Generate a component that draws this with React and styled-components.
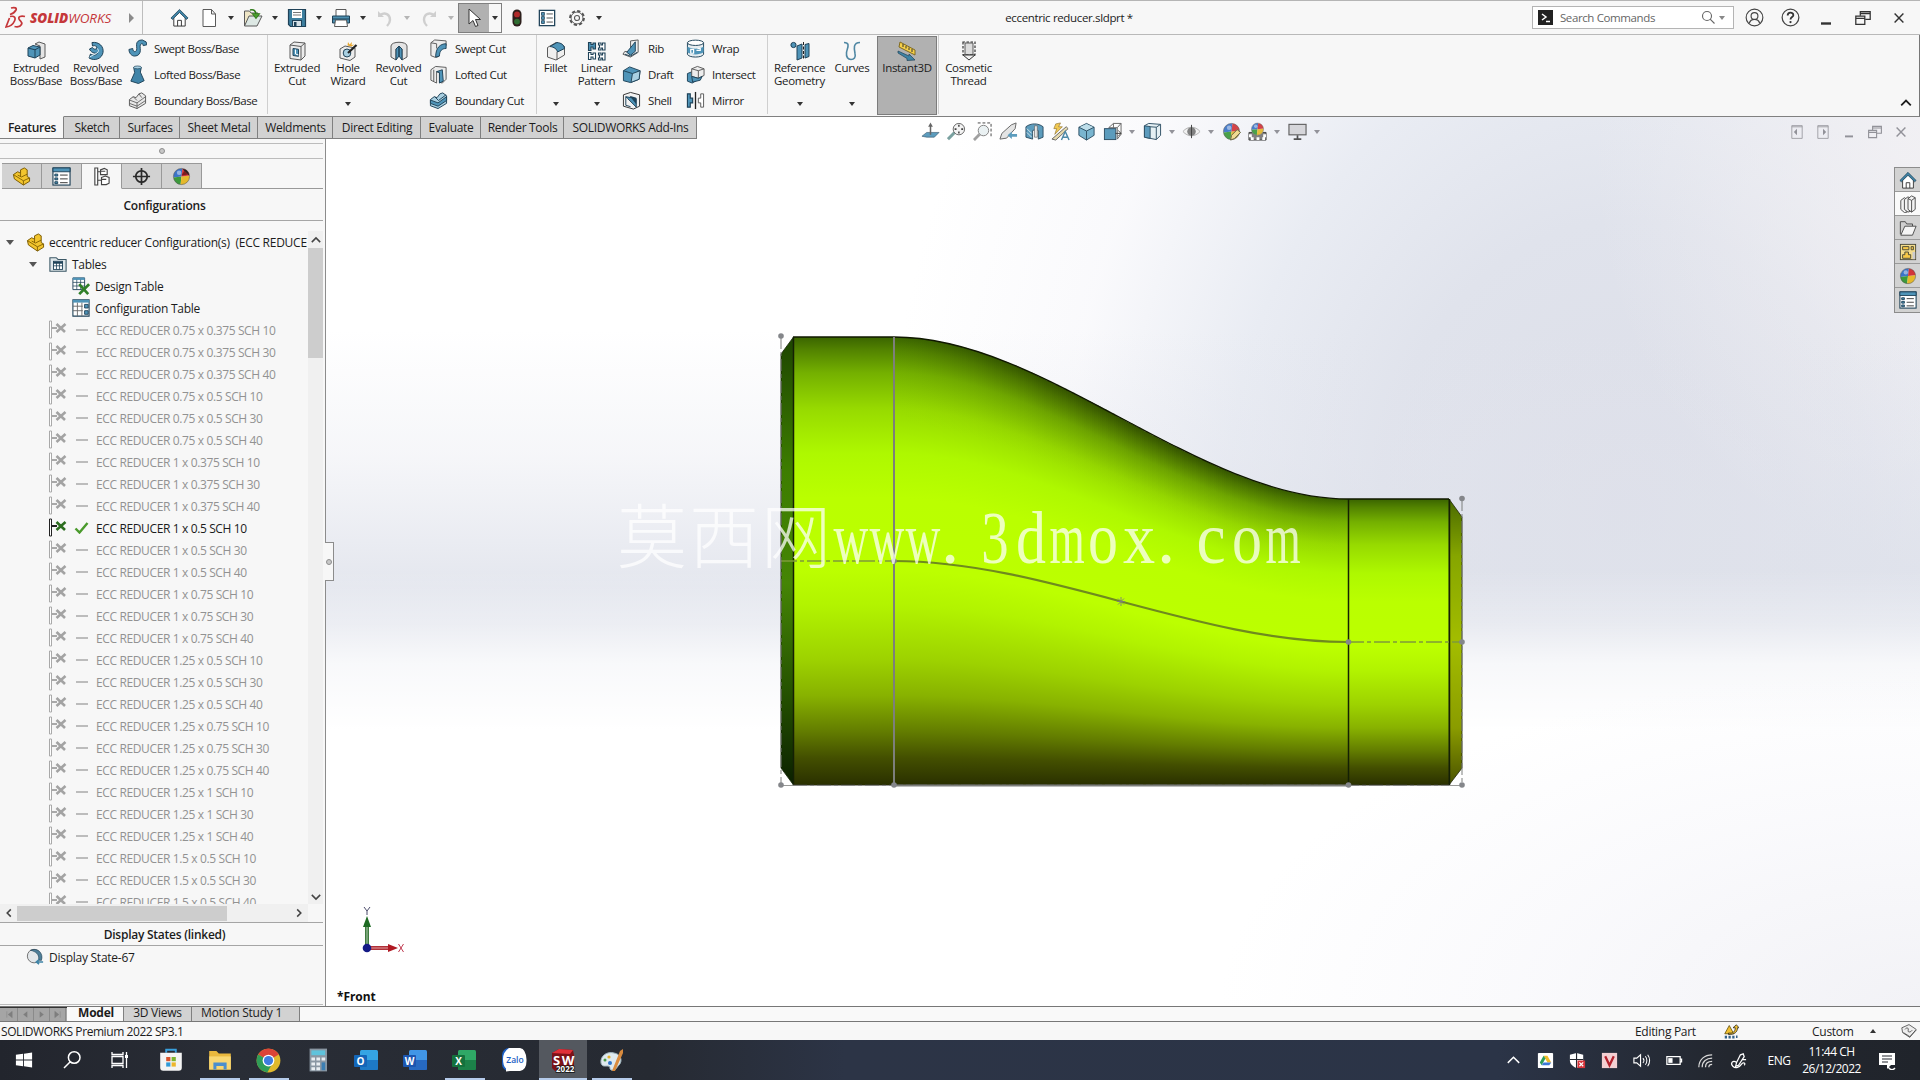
import React from "react";
import styled, { createGlobalStyle, css } from "styled-components";

const GlobalStyle = createGlobalStyle`
  * {
    box-sizing: border-box;
  }
  html, body {
    margin: 0;
    padding: 0;
    background: #f7f7f7;
  }
  body {
    width: 1920px;
    height: 1080px;
    overflow: hidden;
    font-family: "Open Sans", "Noto Sans", sans-serif;
    font-size: 12px;
    letter-spacing: -0.3px;
    color: #1c1c1c;
  }
  svg {
    display: block;
    flex: none;
  }
`;

/* ---------- icons ---------- */

const B = "#4f94b8";
const L = "#a9d0e2";
const D = "#1f4258";
const G = "#5a5a5a";

const house = (
  <>
    <path d="M4 10v9h12v-9l-6-6z" fill="#fff" stroke="#333" />
    <path d="M1 10.5L10 1.5l9 9-1.6 1.5L10 4.8 2.6 12z" fill="#3f84a6" stroke={D} strokeWidth=".8" />
    <path d="M8 19v-6h4v6" fill="none" stroke="#333" />
  </>
);
const listSheet = (
  <>
    <rect x="1.5" y="1.5" width="17" height="17" fill="#fff" stroke={D} strokeWidth="1.4" />
    <g fill={B} stroke={D} strokeWidth=".9">
      <rect x="4" y="4" width="3" height="3" />
      <rect x="4" y="8.5" width="3" height="3" />
      <rect x="4" y="13" width="3" height="3" />
    </g>
    <path d="M9.5 5.5h7M9.5 10h7M9.5 14.5h7" stroke="#444" />
  </>
);
const colorBall = (
  <>
    <circle cx="10" cy="10" r="8.5" fill="#e9e9e9" />
    <path d="M10 10L11 1.6A8.5 8.5 0 0 0 1.6 11z" fill="#3b74c9" />
    <path d="M10 10L1.6 11A8.5 8.5 0 0 0 9 18.5z" fill="#3c9a3c" />
    <path d="M10 10L9 18.5A8.5 8.5 0 0 0 18.4 9z" fill="#e5b92c" />
    <path d="M10 10L18.4 9A8.5 8.5 0 0 0 11 1.6z" fill="#d2343a" />
    <circle cx="7.5" cy="6" r="2.4" fill="#fff" opacity=".45" />
    <circle cx="10" cy="10" r="8.5" fill="none" stroke="#555" strokeWidth=".6" />
  </>
);

const icons = {
  home: house,
  newDoc: <path d="M4 1.5h8.5L16.5 6v12.5H4zM12.5 1.5V6h4" fill="#fff" stroke={G} />,
  open: (
    <>
      <path d="M1.5 18V3h5L8 5h7v4" fill="#efe6c6" stroke={G} />
      <path d="M1.5 18L6 8h13l-5 10z" fill="#dde8e4" stroke={G} />
      <path d="M7 2c4-1 6 1 6 5M10 6l3 4 3-4z" stroke="#2e7a18" strokeWidth="1.6" />
      <path d="M10 6l3 4 3-4z" fill="#4a9b2e" />
    </>
  ),
  save: (
    <>
      <path d="M1.5 1.5h17v17h-15l-2-2z" fill="#3d7f9f" stroke={D} strokeWidth="1.2" />
      <rect x="5" y="2" width="10" height="8" fill="#fff" />
      <path d="M6 4.5h8M6 7h8" stroke="#777" />
      <rect x="5.5" y="12.5" width="9" height="6" fill="#d6e2e8" stroke={D} />
      <rect x="7" y="14" width="2.5" height="4" fill={D} />
    </>
  ),
  print: (
    <>
      <path d="M5 8V1.5h10V8" fill="#fff" stroke={G} />
      <path d="M1.5 8h17v7h-17z" fill="#4d8fb0" stroke={D} />
      <path d="M4.5 12h11l1 6.5h-13z" fill="#fff" stroke={G} />
      <path d="M1.5 11h17" stroke={D} />
    </>
  ),
  undo: (
    <>
      <path d="M3 3v6h6z" fill="#cfcfcf" />
      <path d="M5 7c5-3 10-1 10 5 0 2-1 4-3 6" stroke="#cfcfcf" strokeWidth="2.4" />
    </>
  ),
  redo: (
    <>
      <path d="M17 3v6h-6z" fill="#cfcfcf" />
      <path d="M15 7C10 4 5 6 5 12c0 2 1 4 3 6" stroke="#cfcfcf" strokeWidth="2.4" />
    </>
  ),
  cursor: <path d="M5 1v15l4-3.5 2.5 6 2.5-1-2.5-6h5z" fill="#fff" stroke="#333" />,
  traffic: (
    <>
      <rect x="5" y=".5" width="10" height="19" rx="5" fill="#2d1f1c" />
      <circle cx="10" cy="6" r="3.3" fill="#b02a2a" />
      <circle cx="10" cy="14" r="3.3" fill="#2f6d32" />
    </>
  ),
  list: listSheet,
  gear: (
    <>
      <circle cx="10" cy="10" r="7.6" stroke="#555" strokeWidth="2.4" strokeDasharray="3.6 2.36" />
      <circle cx="10" cy="10" r="6.6" fill="#f7f7f7" stroke="#555" />
      <circle cx="10" cy="10" r="2.8" stroke="#555" strokeWidth="1.2" />
    </>
  ),
  extrude: (
    <>
      <path d="M9 3l4-2 6 2v13l-5 2V5z" fill="#e4e4e4" stroke={G} />
      <path d="M2 7l5-2.5L14 6v8l-5 3-7-2z" fill={B} stroke={D} />
      <path d="M2 7l7 1.8V17M9 8.8L14 6" stroke={D} />
    </>
  ),
  revolve: (
    <>
      <path
        d="M6 1.5c7-1 12 4 11 10-1 6-8 9-14 5.5L4.5 13c3 2 6 1 7-1-3 1-7-1-8-4l3-1.5c1 2 3 2 4.5 1C11 5 9 4 6.5 5z"
        fill={B}
        stroke={D}
      />
      <path d="M11 12l-7.5 4M11 7.5c2 1 2 3 0 4.5" stroke="#d9ecf5" />
    </>
  ),
  sweep: (
    <path
      d="M19 3l-4-2c-4 0-6 2-6 5s1 6-1 7-3-1-3-3l-4 1c0 4 3 7 6 7 4 0 6-3 6-6s-1-6 1-7c2 0 2 1 2 2l4-1z"
      fill={B}
      stroke={D}
    />
  ),
  loft: (
    <>
      <path d="M6 2.5h8l-1 5 4 9-6 3-8-2.5 4-9z" fill="#4084a8" stroke={D} />
      <ellipse cx="10" cy="2.5" rx="4" ry="1.5" fill={L} stroke={D} strokeWidth=".7" />
    </>
  ),
  boundary: (
    <>
      <path d="M1.5 9l4-3 3 1 3-4 3-1 4 3v8l-9 5.5-8-3z" fill="#e8e8e8" stroke={G} />
      <path d="M1.5 9.5l8 3 9-6.5M9.5 12.5v6M5.5 6l4 4M11.5 3l3 4M1.5 13l8 3 9-6" stroke={G} strokeWidth=".9" />
    </>
  ),
  extrudeCut: (
    <>
      <path d="M3 4l4-3 11 1v13l-4 4-11-1.5z" fill="#ececec" stroke={G} />
      <path d="M3 4l11 1.5V19M14 5.5L18 2" stroke={G} />
      <path d="M6 7.5l5.5.8v7L6 14.5z" fill={B} stroke={D} />
      <path d="M8.5 8.5V13l3 1" stroke="#fff" />
    </>
  ),
  hole: (
    <>
      <path d="M2 8l5-3 10 2v9l-5 3.5L2 17z" fill="#ececec" stroke={G} />
      <ellipse cx="9" cy="12" rx="3.8" ry="4" fill={L} stroke={D} />
      <path d="M10 12L18.5 4" stroke="#222" strokeWidth="2.2" />
      <path d="M10 1l1.5 2.5L14 1l-.5 3 3-.5-3 2-4-1z" fill="#e8a72e" />
    </>
  ),
  revolveCut: (
    <>
      <path d="M2 5c0-5 16-5 16 0v11l-5 3V8l-3-2-3 2v11l-5-3z" fill="#e4e4e4" stroke={G} />
      <path d="M7 8l3-3v10l-3 4zM13 8l-3-3v10l3 4z" fill={B} stroke={D} />
    </>
  ),
  sweepCut: (
    <>
      <path d="M2 4l4-3 12 1v5c-5 0-8 4-8 9v2.5l-3 1-5-2z" fill="#ececec" stroke={G} />
      <path d="M18 5C12 5 7 9 7 19l4-1c0-6 3-8 7-8z" fill={B} stroke={D} />
      <path d="M2 4l6 1v5" stroke={G} />
    </>
  ),
  loftCut: (
    <>
      <path d="M2 5l5-3.5 11 1V15l-4 4-3-1V8L8 7v12l-6-3z" fill="#ececec" stroke={G} />
      <path d="M8 7l6-2 1 12-4 2V8z" fill={B} stroke={D} />
      <path d="M5 5v12" stroke={G} />
    </>
  ),
  boundaryCut: (
    <>
      <path d="M1.5 9l4-3 3 1 3-4 3-1 4 3v8l-9 5.5-8-3z" fill={L} stroke={D} />
      <path d="M1.5 9.5l8 3 9-6.5v4l-9 6-8-3z" fill={B} stroke={D} />
      <path d="M6 6l4 4 8-6" stroke={D} />
    </>
  ),
  fillet: (
    <>
      <path d="M1.5 6.5L10 1.5l8.5 4V14L10 19l-8.5-3z" fill="#efefef" stroke={G} />
      <path d="M4 5.5l7-4c4 .5 7 2 7.5 6l-7 3.5C11 8 8 6 4 5.5z" fill={B} stroke={D} />
      <path d="M11 11v8" stroke={G} />
    </>
  ),
  pattern: (
    <g fill="#fff" stroke={D} strokeWidth="1.1">
      <path d="M1.5 1.5H4v2h2V2h2.5v6H6V6H4v3.5H1.5z" fill={B} />
      <path d="M11.5 2H14v2h1.5V2H18v7h-2.5V7H14v2h-2.5V7h1V4h-1z" />
      <path d="M1.5 11.5H4v2h2V12h2.5v6H6v-2H4v2.5H1.5z" />
      <path d="M11.5 12H14v2h1.5v-2H18v7h-2.5v-2H14v2h-2.5v-2h1v-3h-1z" />
    </g>
  ),
  rib: (
    <>
      <path d="M9 2l8-1v13l-8 5-8-3 2-3 6 1z" fill="#efefef" stroke={G} />
      <path d="M5 14L14 3v10l-5 4z" fill={B} stroke={D} />
      <path d="M3 16l6 2 7-4" stroke={D} />
    </>
  ),
  draft: (
    <>
      <path d="M1.5 6L8 2l11 4-1 9-9 3.5-7.5-2z" fill={B} stroke={D} />
      <path d="M11 9l8-3-1 9-8.5 3.3z" fill={L} stroke={D} />
      <path d="M1.5 6L11 9" stroke={D} />
    </>
  ),
  shell: (
    <>
      <path d="M1.5 4L9 1.5 18.5 4v12L12 19 1.5 16z" fill="#f2f2f2" stroke="#333" />
      <path d="M4 6l11 2v9L6 8z" fill={B} stroke={D} />
      <path d="M8 5l7 2v7z" fill={D} />
      <path d="M4 6v9l5 1.5" stroke={D} />
    </>
  ),
  wrap: (
    <>
      <path d="M1.5 4v12c1 4 16 4 17 0V4" fill="#e8eef1" stroke={D} />
      <path d="M1.5 8c4 3 13 3 17 0v6c-4 3-13 3-17 0z" fill={B} />
      <ellipse cx="10" cy="4" rx="8.5" ry="2.8" fill="#fff" stroke={D} />
      <path d="M5 11h3v4H5zM11 12h4v-2h-3" stroke="#fff" strokeWidth="1.3" />
    </>
  ),
  intersect: (
    <>
      <path d="M1.5 9l5-2 5 2v7l-5 3-5-2z" fill={B} stroke={D} />
      <path d="M6 4l6-2.5L19 4v7l-6 3-7-2z" fill="#ededed" stroke={G} />
      <path d="M6 4l7 2v8M13 6l6-2" stroke={G} />
      <path d="M6 12l7 2 4-2-2 4-8 2z" fill={B} stroke={D} />
    </>
  ),
  mirror: (
    <>
      <path d="M1.5 3h3v4.5H7v5H4.5V17h-3z" fill={B} stroke={D} strokeWidth="1.2" />
      <path d="M10 1v18" stroke="#222" strokeWidth="1.4" />
      <path d="M13 7.5h2.5V3h3v14h-3v-4.5H13z" fill="#fff" stroke={G} />
    </>
  ),
  refGeo: (
    <>
      <circle cx="3.5" cy="4" r="2.6" fill={B} stroke={D} />
      <path d="M7 5l5-2v14l-5 2zM15 3.5l4-1v13L15 17z" fill={B} stroke={D} />
      <path d="M13.5 1v18" stroke="#222" strokeDasharray="3 1.5" />
    </>
  ),
  curves: (
    <path
      d="M2 1.5c7 0 3 6 2.5 10C4 16 6 18.5 9 18.5s5-2 4-6c-1-5-2-11 5-11"
      stroke="#4f87a3"
      strokeWidth="1.6"
    />
  ),
  instant: (
    <>
      <path d="M3 1l15 8v5L2 6z" fill="#f5cf49" stroke="#806a20" />
      <path d="M6 3v3M9 5v2.5M12 6.5V9M15 8v3" stroke="#333" />
      <path d="M1 10l11 5v-2l6 6-8 .5v-2L1 12z" fill="#3f84a6" stroke={D} strokeWidth=".7" />
    </>
  ),
  thread: (
    <>
      <path d="M6 2h8v12H6z" fill="#dcdcdc" stroke={G} />
      <path d="M4 1v13h12V1z" stroke="#333" strokeDasharray="2.5 1.5" strokeWidth="1.2" />
      <path d="M4 14h12l-6 5z" fill="#f0f0f0" stroke="#333" />
    </>
  ),
  normalTo: (
    <>
      <path d="M1 15l5-4h13l-5 5H6z" fill={B} stroke={D} strokeWidth=".6" />
      <path d="M10 13.5V4" stroke={G} strokeWidth="1.6" />
      <path d="M10 .5L7.5 5h5z" fill={G} />
    </>
  ),
  zoomFit: (
    <>
      <path d="M1 18l7-7" stroke="#6f9a99" strokeWidth="3.2" />
      <circle cx="12.5" cy="7.5" r="6" fill="#f3f3f3" stroke={G} />
      <path d="M12.5 3v2M12.5 10v2M8 7.5h2M15 7.5h2" stroke="#333" strokeWidth="1.6" />
    </>
  ),
  zoomArea: (
    <>
      <path d="M5 1h14v14" stroke="#333" strokeDasharray="3 2" />
      <path d="M1 19l6-6" stroke="#999" strokeWidth="3" />
      <circle cx="11" cy="9" r="5.5" fill="#e9f0f2" stroke="#777" />
    </>
  ),
  prevView: (
    <>
      <path d="M1 18l2-6L13 3l5-2-1 6-9 10z" fill="#e2e2e2" stroke={G} />
      <path d="M9 14l4.5-4v2.5H19v3h-5.5V18z" fill={B} />
    </>
  ),
  section: (
    <>
      <path d="M1 5c5-4 13-4 18 0v11l-5 2V9c-2-1-4-1-6 0v9l-7-2z" fill={B} stroke={D} />
      <path d="M2 7l5 5M2 11l5 5" stroke="#d5e6ee" />
      <path d="M10 4v12h3V4z" fill="#e5e5e5" stroke={G} strokeWidth=".7" />
    </>
  ),
  dynamic: (
    <>
      <path d="M1 18L16 5l2 2L5 19z" fill="#e6d9a8" stroke={G} />
      <path d="M5 2l5-1-2 4h4l-8 8 2-6H3z" fill="#f1c544" stroke="#8a6a1c" strokeWidth=".7" />
      <path d="M11 19l4-9 4 9M13 16h4" stroke="#3d7f9f" strokeWidth="1.5" />
    </>
  ),
  cube: (
    <>
      <path d="M2 5.5l8-4 8 4V14l-8 5-8-5z" fill="#6fb0cd" stroke={D} />
      <path d="M2.5 5.5L10 2l7.5 3.5L10 9z" fill="#b8dbe8" />
      <path d="M2 5.5l8 4 8-4M10 9.5V19" stroke={D} />
    </>
  ),
  orient: (
    <>
      <path d="M6 6l5-4.5h8V13l-4 5M11 1.5V6M6 6h9l4-4.5M15 6v12" fill="#fff" stroke={G} />
      <rect x="1.5" y="7" width="12" height="11.5" fill={B} stroke={D} />
      <path d="M13 12h6M16 9l3 3-3 3" stroke="#333" />
    </>
  ),
  displayStyle: (
    <>
      <path d="M1.5 4L6 1.5l12.5 1V14L14 18.5 1.5 16z" fill="#e4f0f4" stroke={D} />
      <path d="M1.5 4l6 .8v12.5L1.5 16z" fill={B} stroke={D} />
      <path d="M7.5 5l6.500.5v13M14 5.5l4.500-3" stroke={D} />
    </>
  ),
  eye: (
    <>
      <path d="M1 10c5-6 13-6 18 0-5 6-13 6-18 0z" fill="#f2f2f2" stroke="#aaa" />
      <circle cx="10" cy="10" r="4.5" fill="#777" />
      <path d="M10 3v14" stroke="#333" />
    </>
  ),
  appearance: (
    <>
      {colorBall}
      <path d="M9 19l1-5 6-6 3.5 3-6.5 6.5z" fill="#f0d98a" stroke="#553" />
    </>
  ),
  scene: (
    <>
      <path d="M1 11h18v8H1z" fill="#777" stroke="#333" />
      <path d="M3 19v-3h3v3M9 19v-3h3v3M15 19v-3h3v3M1 13h3v3H1zM16 13h3v3h-3z" fill="#fff" />
      <g transform="translate(2.5 0) scale(.75)">{colorBall}</g>
    </>
  ),
  monitor: (
    <>
      <rect x="1" y="2.5" width="18" height="11" fill="#d4d4d8" stroke="#555" strokeWidth="1.2" />
      <path d="M10 14v4M6 18h8" stroke="#444" strokeWidth="1.8" />
    </>
  ),
  part: (
    <>
      <path d="M1.5 8L6 5l3 1.5V3l4-2 3 2v7l2.500 1.500V15L12 19l-9.500-6.500z" fill="#f2c52e" stroke="#7a5a00" />
      <path d="M12 19v-4.500l6.500-3M12 14.500L1.500 8M6 8.500l4 2 6-3M9 6.500V10" stroke="#7a5a00" strokeWidth=".9" />
    </>
  ),
  property: (
    <>
      <rect x="1" y="1" width="18" height="18" fill="#fff" stroke={D} strokeWidth="1.2" />
      <path d="M1 1h18v4H1z" fill={B} stroke={D} />
      <path d="M3 7.5h3v2H3zM3 11.5h3v2H3zM3 15.5h3v2H3z" fill={B} stroke={D} />
      <path d="M8.5 8.5h8M8.5 12.5h8M8.5 16.5h8" stroke="#333" />
    </>
  ),
  configTab: (
    <g fill="#fff" stroke="#444" strokeWidth="1.2">
      <path d="M3 1h3v18H3zM6 5h4M6 14h5" />
      <path d="M9 3l4-1.500L16 3v5H9zM10 11l4-1.500 4 1.500v6l-3 1.500h-5z" />
      <path d="M9 4.500h5M10 13h5" />
    </g>
  ),
  target: (
    <g stroke="#2a2a2a" strokeWidth="1.8">
      <circle cx="10" cy="10" r="6" />
      <path d="M10 1v18M1 10h18" />
    </g>
  ),
  ball: colorBall,
  managerBall: (
    <>
      {colorBall}
      <path d="M11 2l7 7c0-4-3-7-7-7z" fill="#222" />
      <path d="M10 9l3-5 4 4z" fill="#7a1c20" />
    </>
  ),
  tables: (
    <>
      <path d="M1 3h7l2 2h9v13H1z" fill="#dfe7ea" stroke="#3c5866" strokeWidth="1.2" />
      <rect x="5" y="7" width="10" height="9" fill="#fff" stroke={D} />
      <path d="M5 8.5h10" stroke={D} strokeWidth="2.4" />
      <path d="M5 12h10M8.3 9v7M11.6 9v7" stroke={D} strokeWidth=".9" />
    </>
  ),
  designTable: (
    <>
      <path d="M1 1h13v13H1z" fill="#fff" stroke={D} />
      <path d="M1 2h13" stroke={B} strokeWidth="2.5" />
      <path d="M1 6h13M1 10h13M5.3 3v11M9.6 3v11" stroke={D} strokeWidth=".8" />
      <path d="M8 8l10 11M19 8L8 19" stroke="#2f7f28" strokeWidth="3" />
    </>
  ),
  configTable: (
    <>
      <path d="M1 1h18v18H1z" fill="#fff" stroke={D} strokeWidth="1.2" />
      <path d="M1 2.5h18" stroke={B} strokeWidth="3" />
      <path d="M1 8h11M1 13h11M6 4v15M11 4v15" stroke="#666" />
      <path d="M14 6h4v4h-4zM14 13h4v4h-4z" fill={B} stroke={D} />
    </>
  ),
  displayState: (
    <>
      <circle cx="9" cy="9" r="7.5" fill="#e3e7ea" stroke="#666" />
      <path d="M5 2.5C13-1 20 6 17 14l-3-1c1-6-3-9-9-10.5z" fill="#4f7f99" stroke={D} strokeWidth=".7" />
      <path d="M12 15.5h7M14.5 13l-3 2.5 3 2.5" stroke="#3f84a6" strokeWidth="1.7" />
    </>
  ),
  books: (
    <g fill="#f3f3f3" stroke="#444">
      <path d="M2 6l4-3 3 2v14l-3 .5L2 16z" />
      <path d="M6 5l4-3 3 2v14l-3 1-4-3z" />
      <path d="M10 4l4-3 4 2v13l-4 3-4-3z" />
      <path d="M14 6v13M14 6l4-3M14 6l-4-2" />
    </g>
  ),
  folder: (
    <>
      <path d="M1.5 17V3H7l1.5 2.5H15V8" fill="#cfcfcf" stroke="#444" />
      <path d="M2 18L6.5 8H19l-4 10z" fill="#f5f5f5" stroke="#444" />
    </>
  ),
  palette: (
    <>
      <rect x="1.5" y="1.5" width="17" height="17" fill="#f3dc8c" stroke="#443" />
      <path d="M4 4h7v3.5H4zM13.5 4H16v3.5h-2.5zM4 13v4h9v-4h-2.5v-3h-4v3z" fill="#f7c948" stroke="#443" />
      <rect x="15" y="10" width="3" height="8" fill="#ccc" />
    </>
  ),
  search: (
    <path d="M12.5 12.5L18 18M14 8A6 6 0 1 1 2 8a6 6 0 0 1 12 0z" stroke="currentColor" strokeWidth="1.5" />
  ),
  user: (
    <g stroke="#444" strokeWidth="1.2">
      <circle cx="10" cy="10" r="8.8" />
      <circle cx="10" cy="8.5" r="3.6" />
      <path d="M4.5 16c1-3 3-4 5.5-4s4.5 1 5.5 4" />
    </g>
  ),
  help: (
    <>
      <circle cx="10" cy="10" r="8.8" stroke="#444" strokeWidth="1.3" />
      <path d="M7 8c0-4 6-4 6-.5 0 2-3 2-3 4.5" stroke="#333" strokeWidth="1.9" />
      <circle cx="10" cy="14.8" r="1.2" fill="#333" />
    </>
  ),
  minimize: <path d="M5 15.5h10" stroke="currentColor" strokeWidth="2.4" />,
  restore: (
    <g stroke="currentColor" strokeWidth="1.4">
      <path d="M2 8h10v9H2zM2 10.5h10" />
      <path d="M7 7.5V3h11v8.5h-5.500M7 5h11" />
    </g>
  ),
  close: <path d="M4.5 4.5l11 11M15.5 4.5l-11 11" stroke="currentColor" strokeWidth="1.8" />,
  paneLeft: (
    <>
      <path d="M3.5 2h13v16h-13zM3.5 3.5h13" stroke="currentColor" />
      <path d="M10 6v8l-4-4z" fill="currentColor" />
    </>
  ),
  paneRight: (
    <>
      <path d="M3.5 2h13v16h-13zM3.5 3.5h13" stroke="currentColor" />
      <path d="M10 6v8l4-4z" fill="currentColor" />
    </>
  ),
  chevronUp: <path d="M4 13l6-6 6 6" stroke="currentColor" strokeWidth="2.2" />,
  chevronDown: <path d="M4 7l6 6 6-6" stroke="currentColor" strokeWidth="2.2" />,
  chevronLeft: <path d="M13 4l-6 6 6 6" stroke="currentColor" strokeWidth="2.6" />,
  chevronRight: <path d="M7 4l6 6-6 6" stroke="currentColor" strokeWidth="2.6" />,
  first: <path d="M4 3v14M16 3v14l-9-7z" fill="currentColor" stroke="currentColor" />,
  previous: <path d="M14 3v14l-9-7z" fill="currentColor" />,
  next: <path d="M6 3v14l9-7z" fill="currentColor" />,
  last: <path d="M16 3v14M4 3v14l9-7z" fill="currentColor" stroke="currentColor" />,
  rebuild: (
    <>
      <path d="M1 13L7 2l6 11z" fill="#f0c030" stroke="#5a4500" />
      <path d="M6 12c6 1 9-2 9-7h-3l4.5-4L20 5h-2c0 6-4 9-12 9z" fill="#f0c030" stroke="#222" />
      <path d="M1 17.5h3M6 17.5h3M11 17.5h3M16 17h2" stroke="#33618a" strokeWidth="3.5" />
    </>
  ),
  tag: (
    <g fill="#eee" stroke="#444">
      <path d="M1 6l9-4 9 6-8 10-9-6z" />
      <path d="M5 8c2-3 5-2 4 1s3 3 5 0M3 12l8 5 8-8" fill="none" />
    </g>
  ),
  windows: (
    <path d="M1 4.3l8-1.2v6.4H1zM10 3l9-1.4v7.9h-9zM1 10.5h8v6.4l-8-1.2zM10 10.5h9v7.9L10 17z" fill="#fff" />
  ),
  taskSearch: (
    <path d="M8 12L2 18M18 7.5a5.8 5.8 0 1 1-11.6 0 5.8 5.8 0 0 1 11.6 0z" stroke="#fff" strokeWidth="1.5" />
  ),
  taskView: (
    <g stroke="#fff" strokeWidth="1.3">
      <path d="M2 6.5h11v7H2zM2 2v2.5h11V2M2 18v-2.5h11V18M16.5 2v16" />
      <path d="M15 6.5h3" strokeWidth="3" />
    </g>
  ),
  store: (
    <>
      <path d="M6 4V1.5h8V4" stroke="#39a0dd" strokeWidth="1.6" />
      <path d="M1 4h18v12.5a2.5 2.5 0 0 1-2.5 2.5h-13A2.5 2.5 0 0 1 1 16.5z" fill="#f4f4f4" />
      <path d="M6 7.5h3.5V11H6z" fill="#d9532c" />
      <path d="M10.5 7.5H14V11h-3.5z" fill="#7db52f" />
      <path d="M6 12h3.5v3.5H6z" fill="#2f9ad8" />
      <path d="M10.5 12H14v3.5h-3.5z" fill="#edb62c" />
    </>
  ),
  explorer: (
    <>
      <path d="M1 2.5h6l2 2h10V18H1z" fill="#e9b83e" />
      <path d="M1 7h18v11H1z" fill="#f8d773" />
      <path d="M4.5 18v-6h11v6H13v-3H7v3z" fill="#4a8fce" />
    </>
  ),
  chrome: (
    <>
      <circle cx="10" cy="10" r="9.5" fill="#e0b92d" />
      <path d="M10 10L1.8 5.2A9.5 9.5 0 0 1 18.2 5.2z" fill="#db4437" />
      <path d="M10 10L1.8 5.2A9.5 9.5 0 0 0 9 19.5l4-7z" fill="#2f9d58" />
      <circle cx="10" cy="10" r="4.7" fill="#fff" />
      <circle cx="10" cy="10" r="3.7" fill="#3f7de0" />
    </>
  ),
  calculator: (
    <>
      <rect x="3" y=".5" width="14.5" height="19" fill="#8a97a3" />
      <rect x="4.5" y="2" width="11.5" height="4" fill="#5fc3dc" />
      <path
        d="M4.5 8h3v2.5h-3zM8.7 8h3v2.5h-3zM13 8h3v2.5h-3zM4.5 12h3v2.5h-3zM8.7 12h3v2.5h-3zM4.5 16h3v2.5h-3zM8.7 16h3v2.5h-3z"
        fill="#e9eef2"
      />
      <path d="M13 12h3v6.5h-3z" fill="#3c7fb3" />
    </>
  ),
};

const Icon = ({ name, size = 20 }) => (
  <svg width={size} height={size} viewBox="0 0 20 20" fill="none">
    {icons[name]}
  </svg>
);

const Caret = styled.i`
  width: 0;
  height: 0;
  border: 3px solid transparent;
  border-top: 4px solid ${(p) => p.$color || "#333"};
  border-bottom: 0;
`;

/* ---------- title bar ---------- */

const TitleBar = styled.header`
  display: flex;
  align-items: center;
  height: 35px;
  background: #f7f7f7;
  border-top: 1px solid #b5b5b5;
  border-bottom: 1px solid #b9b9b9;
`;

const Brand = styled.div`
  display: flex;
  align-items: center;
  align-self: stretch;
  width: 143px;
  padding-left: 5px;
  border-right: 1px solid #bdbdbd;
  color: #c5373a;
`;

const BrandName = styled.span`
  width: 99px;
  margin-left: 4px;
  font-size: 13.5px;
  font-style: italic;
  letter-spacing: -0.05px;

  b {
    font-weight: 800;
  }
`;

const BrandArrow = styled.i`
  border: 5px solid transparent;
  border-left-color: #8b8b8b;
  border-right: 0;
`;

const QuickTools = styled.div`
  display: flex;
  align-items: center;
  width: 829px;
  padding-left: 24px;
`;

const Cell = styled.span`
  display: flex;
  flex: none;
  align-items: center;
  justify-content: center;
  width: ${(p) => p.$w || 22}px;
`;

const SelectTool = styled.div`
  display: flex;
  height: 30px;
  margin-left: -4px;
  border: 1px solid #7f7f7f;

  ${Cell}:first-child {
    background: #b1b1b1;
  }
`;

const DocTitle = styled.div`
  width: 194px;
  font-size: 11.5px;
  letter-spacing: -0.35px;
  text-align: center;
`;

const SearchBox = styled.div`
  display: flex;
  align-items: center;
  width: 202px;
  height: 23px;
  margin-left: 366px;
  padding: 0 5px;
  background: #fff;
  border: 1px solid #b4b4b4;
  color: #666;
  font-size: 11.5px;
  letter-spacing: -0.38px;
  white-space: nowrap;
`;

const SearchHint = styled.span`
  width: 142px;
  margin-left: 7px;
`;

const Prompt = styled.i`
  display: grid;
  place-items: center;
  width: 15px;
  height: 15px;
  background: #222;
`;

const WindowControls = styled.div`
  display: flex;
  color: #333;
`;

const quickTools = ["newDoc", "open", "save", "print", "undo", "redo"];

const Title = () => (
  <TitleBar>
    <Brand>
      <svg width="21" height="24" viewBox="0 0 21 24" fill="none" stroke="#c5373a" strokeWidth="1.7">
        <path d="M6 2c4-1 6 0 5 2S8 7.5 5 8.5" />
        <path d="M5 10.5c4.5-1 6 1 4.5 4.5S5 20.5 1 21l3.500-9" />
        <path d="M20 10.5c-4-1-7 0-6 2.5s4 3 2.5 5.5-5 2.5-7 2" />
      </svg>
      <BrandName>
        <b>SOLID</b>WORKS
      </BrandName>
      <BrandArrow />
    </Brand>
    <QuickTools>
      <Cell $w={25}>
        <Icon name="home" size={19} />
      </Cell>
      <Cell $w={6} />
      {quickTools.map((name) => (
        <React.Fragment key={name}>
          <Cell>
            <Icon name={name} />
          </Cell>
          <Cell>
            <Caret $color={name === "undo" || name === "redo" ? "#b5b5b5" : "#333"} />
          </Cell>
        </React.Fragment>
      ))}
      <SelectTool>
        <Cell $w={30}>
          <Icon name="cursor" />
        </Cell>
        <Cell $w={12}>
          <Caret />
        </Cell>
      </SelectTool>
      <Cell $w={30}>
        <Icon name="traffic" size={18} />
      </Cell>
      <Cell $w={29}>
        <Icon name="list" size={18} />
      </Cell>
      <Cell $w={31}>
        <Icon name="gear" size={18} />
      </Cell>
      <Cell $w={13}>
        <Caret />
      </Cell>
    </QuickTools>
    <DocTitle>eccentric reducer.sldprt *</DocTitle>
    <SearchBox>
      <Prompt>
        <svg width="11" height="11" viewBox="0 0 11 11" fill="none" stroke="#fff" strokeWidth="1.5">
          <path d="M2 2l4 3-4 3M6 9.5h4" />
        </svg>
      </Prompt>
      <SearchHint>Search Commands</SearchHint>
      <Icon name="search" size={15} />
      <Cell $w={12}>
        <Caret $color="#888" />
      </Cell>
    </SearchBox>
    <WindowControls>
      <Cell $w={41}>
        <Icon name="user" size={19} />
      </Cell>
      <Cell $w={31}>
        <Icon name="help" size={19} />
      </Cell>
      <Cell $w={40}>
        <Icon name="minimize" />
      </Cell>
      <Cell $w={34}>
        <Icon name="restore" size={18} />
      </Cell>
      <Cell $w={38}>
        <Icon name="close" size={16} />
      </Cell>
    </WindowControls>
  </TitleBar>
);

/* ---------- ribbon ---------- */

const Ribbon = styled.div`
  display: flex;
  height: 82px;
  background: #f7f7f7;
  border-right: 1px solid #777;
  border-bottom: 1px solid #808080;
  font-size: 11.5px;
  letter-spacing: -0.32px;
`;

const BigButton = styled.div`
  display: flex;
  flex-direction: column;
  align-items: center;
  width: ${(p) => p.$w}px;
  height: 80px;
  padding-top: 6px;
  line-height: 13px;
  text-align: center;
  white-space: nowrap;
  ${(p) =>
    p.$active &&
    css`
      height: 79px;
      margin: 1px 1px 0 0;
      padding-top: 4px;
      background: #b1b1b1;
      border: 1px solid #7c7c7c;
    `}

  ${Caret} {
    margin-top: 14px;
  }
`;

const BigLabel = styled.span`
  height: 27px;
`;

const SmallColumn = styled.div`
  display: flex;
  flex-direction: column;
  width: ${(p) => p.$w}px;
`;

const SmallButton = styled.div`
  display: flex;
  align-items: center;
  gap: 7px;
  height: 26px;
  letter-spacing: -0.4px;
  white-space: nowrap;
`;

const Divider = styled.i`
  width: 1px;
  height: 79px;
  margin-right: ${(p) => p.$gap || 0}px;
  background: #cfcfcf;
`;

const CollapseMark = styled.div`
  display: flex;
  flex: 1;
  align-items: flex-end;
  justify-content: flex-end;
  padding: 0 5px 5px 0;
`;

const Big = ({ icon, lines, menu, ...rest }) => (
  <BigButton {...rest}>
    <Icon name={icon} />
    <BigLabel>
      {lines[0]}
      <br />
      {lines[1]}
    </BigLabel>
    {menu && <Caret />}
  </BigButton>
);

const Small = ({ items, width }) => (
  <SmallColumn $w={width}>
    {items.map(([icon, label]) => (
      <SmallButton key={label}>
        <Icon name={icon} size={19} />
        {label}
      </SmallButton>
    ))}
  </SmallColumn>
);

const Commands = () => (
  <Ribbon>
    <Cell $w={6} />
    <Big $w={60} icon="extrude" lines={["Extruded", "Boss/Base"]} />
    <Big $w={60} icon="revolve" lines={["Revolved", "Boss/Base"]} />
    <Cell $w={2} />
    <Small
      width={139}
      items={[
        ["sweep", "Swept Boss/Base"],
        ["loft", "Lofted Boss/Base"],
        ["boundary", "Boundary Boss/Base"],
      ]}
    />
    <Divider $gap={2} />
    <Big $w={54} icon="extrudeCut" lines={["Extruded", "Cut"]} />
    <Big $w={48} icon="hole" lines={["Hole", "Wizard"]} menu />
    <Big $w={53} icon="revolveCut" lines={["Revolved", "Cut"]} />
    <Cell $w={4} />
    <Small
      width={107}
      items={[
        ["sweepCut", "Swept Cut"],
        ["loftCut", "Lofted Cut"],
        ["boundaryCut", "Boundary Cut"],
      ]}
    />
    <Divider />
    <Big $w={37} icon="fillet" lines={["Fillet"]} menu />
    <Big $w={45} icon="pattern" lines={["Linear", "Pattern"]} menu />
    <Cell $w={3} />
    <Small
      width={64}
      items={[
        ["rib", "Rib"],
        ["draft", "Draft"],
        ["shell", "Shell"],
      ]}
    />
    <Small
      width={81}
      items={[
        ["wrap", "Wrap"],
        ["intersect", "Intersect"],
        ["mirror", "Mirror"],
      ]}
    />
    <Divider />
    <Big $w={63} icon="refGeo" lines={["Reference", "Geometry"]} menu />
    <Big $w={42} icon="curves" lines={["Curves"]} menu />
    <Cell $w={4} />
    <Big $w={60} icon="instant" lines={["Instant3D"]} $active />
    <Divider />
    <Big $w={59} icon="thread" lines={["Cosmetic", "Thread"]} />
    <CollapseMark>
      <Icon name="chevronUp" size={16} />
    </CollapseMark>
  </Ribbon>
);

/* ---------- left panel ---------- */

const Workspace = styled.main`
  display: flex;
  height: 889px;
`;

const Tabs = styled.nav`
  position: absolute;
  z-index: 2;
  top: 116px;
  left: 0;
  display: flex;
  height: 23px;
`;

const Tab = styled.div`
  display: flex;
  align-items: center;
  justify-content: center;
  width: ${(p) => p.$w}px;
  padding-left: 1px;
  background: ${(p) => (p.$active ? "#f7f7f7" : "#d2d2d2")};
  border: 1px solid #808080;
  border-left-width: 0;
  letter-spacing: -0.32px;
  white-space: nowrap;
  ${(p) =>
    p.$active &&
    css`
      border-top-color: #f7f7f7;
      font-weight: 600;
    `}
`;

const Panel = styled.aside`
  position: relative;
  display: flex;
  flex-direction: column;
  width: 326px;
  padding-top: 26px;
  background: #f7f7f7;
  border-right: 1px solid #8c8c8c;
`;

const Grip = styled.div`
  display: grid;
  place-items: center;
  width: 323px;
  height: 16px;
  border-top: 1px solid #bcbcbc;
  border-bottom: 1px solid #bcbcbc;
`;

const Dot = styled.i`
  width: 6px;
  height: 6px;
  background: #c8c8c8;
  border: 1px solid #8e8e8e;
  border-radius: 50%;
`;

const ManagerTabs = styled.div`
  display: flex;
  width: 323px;
  height: 26px;
  margin-top: 4px;
  padding-left: 2px;

  &::after {
    content: "";
    flex: 1;
    border-bottom: 1px solid #999;
  }
`;

const ManagerTab = styled.div`
  display: grid;
  place-items: center;
  width: 40px;
  background: ${(p) => (p.$active ? "#f7f7f7" : "#d2d2d2")};
  border: 1px solid #999;
  border-left: 0;
  border-bottom-color: ${(p) => (p.$active ? "#f7f7f7" : "#999")};
`;

const Heading = styled.h2`
  width: 323px;
  height: ${(p) => p.$h}px;
  margin: 0;
  padding-left: 6px;
  border-bottom: 1px solid #a5a5a5;
  font-size: 12px;
  font-weight: 600;
  line-height: ${(p) => p.$h + 1}px;
  letter-spacing: -0.25px;
  text-align: center;
`;

const TreeArea = styled.div`
  display: grid;
  grid-template: 673px 18px / 308px 15px;
  width: 323px;
  height: 702px;
  padding-top: 10px;
  border-bottom: 1px solid #a5a5a5;
`;

const Tree = styled.ul`
  margin: 0;
  padding: 0;
  overflow: hidden;
  list-style: none;
`;

const Row = styled.li`
  display: flex;
  align-items: center;
  height: 22px;
  padding-left: ${(p) => p.$indent || 0}px;
  color: ${(p) => (p.$muted ? "#929292" : "#1c1c1c")};
  letter-spacing: ${(p) => (p.$tight ? "-0.37px" : "-0.26px")};
  white-space: pre;
`;

const Expander = styled.i`
  width: 0;
  height: 0;
  margin-right: 12px;
  border: 4px solid transparent;
  border-top: 5px solid #555;
  border-bottom: 0;
`;

const RowLabel = styled.span`
  margin-left: ${(p) => p.$gap || 5}px;
`;

const Mark = styled.span`
  display: flex;
  justify-content: center;
  width: 29px;
`;

const VScroll = styled.div`
  display: flex;
  flex-direction: column;
  align-items: center;
  padding-top: 2px;
  background: #f0f0f0;
  color: #444;
`;

const VThumb = styled.i`
  width: 15px;
  height: 110px;
  margin: 1px 0 auto;
  background: #cdcdcd;
`;

const HScroll = styled.div`
  display: flex;
  align-items: center;
  background: #f0f0f0;
  color: #444;
`;

const HThumb = styled.i`
  width: 210px;
  height: 15px;
  margin-right: auto;
  background: #cdcdcd;
`;

const PanelHandle = styled.div`
  position: absolute;
  z-index: 3;
  top: 425px;
  left: 325px;
  display: grid;
  place-items: center;
  width: 9px;
  height: 39px;
  background: #f7f7f7;
  border: 1px solid #8c8c8c;
  border-left: 0;
`;

const PanelFoot = styled.div`
  width: 323px;
  margin: auto 0 1px;
  border-top: 1px solid #bcbcbc;
`;

const sizes = [
  "0.75 x 0.375",
  "0.75 x 0.5",
  "1 x 0.375",
  "1 x 0.5",
  "1 x 0.75",
  "1.25 x 0.5",
  "1.25 x 0.75",
  "1.25 x 1",
  "1.5 x 0.5",
];
const configurations = sizes.flatMap((size) => [10, 30, 40].map((sch) => `ECC REDUCER ${size} SCH ${sch}`));
const activeConfiguration = "ECC REDUCER 1 x 0.5 SCH 10";

const ConfigIcon = ({ active }) => (
  <svg width="19" height="20" viewBox="0 0 19 20" fill="none">
    <path d="M1.5 1v17h2V1z" fill="#fff" stroke={active ? "#222" : "#a9a9a9"} />
    <path d="M4 8h5" stroke={active ? "#222" : "#a9a9a9"} strokeWidth="2" />
    <path d="M8.5 4l8.5 8M17.5 4l-9 8" stroke={active ? "#2c6d1f" : "#a3a3a3"} strokeWidth="2.6" />
  </svg>
);

const headerTabs = [
  ["Features", 64],
  ["Sketch", 56],
  ["Surfaces", 60],
  ["Sheet Metal", 78],
  ["Weldments", 75],
  ["Direct Editing", 88],
  ["Evaluate", 60],
  ["Render Tools", 83],
  ["SOLIDWORKS Add-Ins", 133],
];

const ConfigurationPanel = () => (
  <Panel>
    <Grip>
      <Dot />
    </Grip>
    <ManagerTabs>
      {["part", "property", "configTab", "target", "managerBall"].map((name) => (
        <ManagerTab key={name} $active={name === "configTab"}>
          <Icon name={name} size={19} />
        </ManagerTab>
      ))}
    </ManagerTabs>
    <Heading $h={32}>Configurations</Heading>
    <TreeArea>
      <Tree>
        <Row $indent={6}>
          <Expander />
          <Icon name="part" size={19} />
          <RowLabel $gap={4}>{"eccentric reducer Configuration(s)  (ECC REDUCE"}</RowLabel>
        </Row>
        <Row $indent={29}>
          <Expander />
          <Icon name="tables" size={18} />
          <RowLabel>Tables</RowLabel>
        </Row>
        <Row $indent={72}>
          <Icon name="designTable" size={18} />
          <RowLabel>Design Table</RowLabel>
        </Row>
        <Row $indent={72}>
          <Icon name="configTable" size={18} />
          <RowLabel>Configuration Table</RowLabel>
        </Row>
        {configurations.map((name) => {
          const active = name === activeConfiguration;
          return (
            <Row key={name} $indent={48} $muted={!active} $tight>
              <ConfigIcon active={active} />
              <Mark>
                <svg width="15" height="12" viewBox="0 0 15 12" fill="none">
                  {active ? (
                    <path d="M1.5 6.5l4 4 8-9.5" stroke="#4a9a2c" strokeWidth="2.4" />
                  ) : (
                    <path d="M2 6h12" stroke="#a3a3a3" strokeWidth="1.4" />
                  )}
                </svg>
              </Mark>
              {name}
            </Row>
          );
        })}
      </Tree>
      <VScroll>
        <Icon name="chevronUp" size={14} />
        <VThumb />
        <Icon name="chevronDown" size={14} />
      </VScroll>
      <HScroll>
        <Cell $w={17}>
          <Icon name="chevronLeft" size={12} />
        </Cell>
        <HThumb />
        <Cell $w={18}>
          <Icon name="chevronRight" size={12} />
        </Cell>
      </HScroll>
    </TreeArea>
    <Heading $h={23}>Display States (linked)</Heading>
    <Row $indent={26}>
      <Icon name="displayState" size={18} />
      <RowLabel>Display State-67</RowLabel>
    </Row>
    <PanelFoot />
    <PanelHandle>
      <Dot />
    </PanelHandle>
  </Panel>
);

/* ---------- graphics area ---------- */

const Viewport = styled.section`
  position: relative;
  flex: 1;
  background:
    radial-gradient(ellipse 700px 340px at 100% 100%, #f2f2f6 0%, rgba(246, 246, 250, 0.6) 55%, rgba(255, 255, 255, 0) 100%),
    linear-gradient(to bottom, rgba(255, 255, 255, 0) 51%, rgba(255, 255, 255, 0.3) 57%, rgba(255, 255, 255, 0.75) 61.5%, #fff 69%),
    linear-gradient(to bottom, rgba(226, 228, 237, 0) 24%, rgba(226, 228, 237, 0.32) 38%, rgba(223, 226, 235, 0.85) 53%),
    radial-gradient(ellipse 360px 420px at 102% 4%, rgba(242, 240, 243, 0.9) 0%, rgba(240, 240, 245, 0) 100%),
    radial-gradient(ellipse 740px 900px at 1300px 400px, #dcdee8 0%, #e0e3ec 33%, #e9ecf3 54%, rgba(246, 246, 250, 0.6) 76%, rgba(255, 255, 255, 0) 100%),
    #fff;
`;

const HeadsUp = styled.div`
  display: flex;
  align-items: center;
  height: 29px;
  padding-left: 591px;
  color: #8b8b92;
  opacity: 0.92;
`;

const DocControls = styled.div`
  display: flex;
  margin-left: auto;
  padding-right: 6px;
`;

const TaskPane = styled.div`
  position: absolute;
  z-index: 2;
  top: 50px;
  right: 0;
  width: 26px;
  border: 1px solid #8c8c8c;
  border-right: 0;
`;

const PaneTab = styled.div`
  display: grid;
  place-items: center;
  height: 24px;
  background: ${(p) => (p.$active ? "#fafafa" : "#d2d2d2")};
  border-bottom: 1px solid #9a9a9a;

  &:last-child {
    border-bottom: 0;
  }
`;

const Drawing = styled.svg`
  position: absolute;
  top: 0;
  left: 0;
`;

const ViewName = styled.div`
  position: absolute;
  left: 11px;
  bottom: 1px;
  color: #111;
  font-family: "Noto Sans", sans-serif;
  font-weight: 700;
  letter-spacing: 0;
`;

const Watermark = styled.div`
  position: absolute;
  top: 368px;
  left: 291px;
  display: flex;
  align-items: baseline;
  height: 96px;
  color: rgba(255, 255, 255, 0.74);
  font-family: "Liberation Serif", "Noto Sans CJK SC", serif;
  font-size: 73px;
  line-height: 96px;
  letter-spacing: 0;
`;

const Hanzi = styled.span`
  width: 216px;
  font-family: "Noto Sans CJK SC", sans-serif;
  font-size: 70px;
  font-weight: 300;
  letter-spacing: 2px;
`;

const Glyph = styled.span`
  display: flex;
  justify-content: ${(p) => (p.$stop ? "flex-start" : "center")};
  width: 36px;
  transform: scaleX(${(p) => p.$squeeze});
`;

const squeeze = { w: 0.66, m: 0.62, 3: 0.75, d: 0.82, o: 0.82, x: 0.88, c: 0.9, ".": 1 };

const left = 894;
const right = 1348;
const bottom = 785;
const STEP = 2;

// x and y of the transition curve for t in 0..1, softened by 150px handles
const profile = Array.from({ length: 401 }, (_, i) => {
  const t = i / 400;
  const u = 1 - t;
  return [left + 450 * t * u * u + 912 * t * t * u + 454 * t * t * t, 337 + 162 * (3 * t * t - 2 * t * t * t)];
});
const topAt = (x) => (profile.find((p) => p[0] >= x) || profile[400])[1];
const slices = Array.from({ length: (right - left) / STEP }, (_, i) => left + i * STEP);

const sketchPoints = [
  [781, 336],
  [781, 785],
  [894, 561],
  [894, 785],
  [1348.5, 642],
  [1348.5, 785],
  [1462, 498.5],
  [1462, 642],
  [1462, 785],
];

const Reducer = () => (
  <Drawing width="1594" height="889" viewBox="326 117 1594 889" fill="none">
    <defs>
      <linearGradient id="skin" x1="0" y1="0" x2="0" y2="1">
        <stop offset="0" stopColor="#3a6400" />
        <stop offset=".03" stopColor="#538400" />
        <stop offset=".08" stopColor="#74b000" />
        <stop offset=".16" stopColor="#97da00" />
        <stop offset=".26" stopColor="#aef800" />
        <stop offset=".36" stopColor="#baff00" />
        <stop offset=".52" stopColor="#bcff00" />
        <stop offset=".6" stopColor="#b2f300" />
        <stop offset=".72" stopColor="#9dd200" />
        <stop offset=".8" stopColor="#88b200" />
        <stop offset=".88" stopColor="#637d00" />
        <stop offset=".94" stopColor="#434f00" />
        <stop offset="1" stopColor="#2a3000" />
      </linearGradient>
      <linearGradient id="slope" x1="0" y1="0" x2="0" y2="1">
        <stop offset="0" stopColor="#2c3c00" stopOpacity=".45" />
        <stop offset=".08" stopColor="#4c6800" stopOpacity=".2" />
        <stop offset=".2" stopColor="#7aaa00" stopOpacity="0" />
      </linearGradient>
      <linearGradient id="bevelLeft" x1="0" y1="0" x2="0" y2="1">
        <stop offset="0" stopColor="#1d4500" />
        <stop offset=".3" stopColor="#3d7d00" />
        <stop offset=".55" stopColor="#458505" />
        <stop offset=".8" stopColor="#245000" />
        <stop offset="1" stopColor="#0b2000" />
      </linearGradient>
      <linearGradient id="bevelRight" x1="0" y1="0" x2="0" y2="1">
        <stop offset="0" stopColor="#4a6a00" />
        <stop offset=".2" stopColor="#86a600" />
        <stop offset=".5" stopColor="#a3bd00" />
        <stop offset=".8" stopColor="#8a9c00" />
        <stop offset="1" stopColor="#4a5200" />
      </linearGradient>
    </defs>

    <rect x="793" y="337" width="101.5" height="448" fill="url(#skin)" />
    <rect x="1348" y="499" width="101" height="286" fill="url(#skin)" />
    {slices.map((x) => {
      const y = topAt(x + 1);
      const tilt = Math.sin((Math.PI * (x - left)) / (right - left));
      return (
        <g key={x}>
          <rect x={x} y={y} width={STEP + 0.5} height={bottom - y} fill="url(#skin)" />
          <rect x={x} y={y} width={STEP} height={bottom - y} fill="url(#slope)" opacity={tilt} />
        </g>
      );
    })}
    <path d="M793.5 337L781 354V768l12.5 17z" fill="url(#bevelLeft)" stroke="#16260a" strokeWidth=".8" />
    <path d="M1449 499l13 18V768l-13 17z" fill="url(#bevelRight)" stroke="#20240a" strokeWidth=".8" />

    <path d="M793 337H894C1044 337 1198 499 1348 499H1449" stroke="#101800" strokeWidth="1.4" />
    <path d="M793.5 337V785M1348.5 499V785M1449.5 499V785" stroke="#142004" strokeWidth="1.5" />
    <path d="M793 785H1449" stroke="#3a3f30" strokeWidth="1.2" strokeDasharray="14 3 4 3" />

    <g stroke="#7d7f7c">
      <path d="M894 337V785M894 785.5H1348" strokeWidth="2" />
      <path d="M894 561C1044 561 1198 642 1348 642" stroke="#6f8a1e" strokeWidth="2.2" />
      <path d="M781 561H894M1348 642H1462" stroke="#7f9a3a" strokeDasharray="16 3 4 3" strokeWidth="1.3" />
      <path d="M781 337V785M1462 499V785" strokeDasharray="12 3 4 3" />
      <path d="M781 785.5H1462" strokeWidth=".8" />
      <path d="M1121 597v9M1117 601.5h8M1118 598.5l6 6M1124 598.5l-6 6" strokeWidth=".9" />
    </g>
    <g fill="#84868a">
      {sketchPoints.map(([x, y]) => (
        <circle key={`${x}-${y}`} cx={x} cy={y} r="2.8" />
      ))}
    </g>

    {/* axis triad */}
    <path d="M367 946V922" stroke="#3f7a3f" strokeWidth="4" />
    <path d="M367 946V924" stroke="#9bbf9b" strokeWidth="1.2" />
    <path d="M367 916l4 11h-8z" fill="#1d6a22" />
    <path d="M369 948h20" stroke="#b03038" strokeWidth="4" />
    <path d="M371 948h18" stroke="#dc8a8e" strokeWidth="1.2" />
    <path d="M398 948l-10-4v8z" fill="#b01822" />
    <circle cx="367" cy="948" r="4.3" fill="#141a86" />
    <path d="M364 907l3 4 3-4M367 911v4" stroke="#4b4b6b" />
    <path d="M398.5 944l5 8M403.5 944l-5 8" stroke="#c03a50" />
  </Drawing>
);

// icon, cell width and, where the tool opens a menu, the width of its caret cell
const headsUpItems = [
  ["normalTo", 26],
  ["zoomFit", 26],
  ["zoomArea", 26],
  ["prevView", 26],
  ["section", 26],
  ["dynamic", 26],
  ["cube", 26],
  ["orient", 26, 14],
  ["displayStyle", 26, 13],
  ["eye", 26, 14],
  ["appearance", 26],
  ["scene", 26, 14],
  ["monitor", 26, 14],
];

const GraphicsArea = () => (
  <Viewport>
    <Reducer />
    <HeadsUp>
      {headsUpItems.map(([name, width, menu]) => (
        <React.Fragment key={name}>
          <Cell $w={width}>
            <Icon name={name} size={19} />
          </Cell>
          {menu && (
            <Cell $w={menu}>
              <Caret $color="#8b8b92" />
            </Cell>
          )}
        </React.Fragment>
      ))}
      <DocControls>
        {["paneLeft", "paneRight", "minimize", "restore", "close"].map((name) => (
          <Cell key={name} $w={26}>
            <Icon name={name} size={16} />
          </Cell>
        ))}
      </DocControls>
    </HeadsUp>
    <TaskPane>
      {["home", "books", "folder", "palette", "ball", "property"].map((name) => (
        <PaneTab key={name} $active={name === "books"}>
          <Icon name={name} size={18} />
        </PaneTab>
      ))}
    </TaskPane>
    <Watermark>
      <Hanzi>莫西网</Hanzi>
      {[..."www.3dmox.com"].map((char, i) => (
        <Glyph key={i} $squeeze={squeeze[char]} $stop={char === "."}>
          {char}
        </Glyph>
      ))}
    </Watermark>
    <ViewName>*Front</ViewName>
  </Viewport>
);

/* ---------- bottom bars ---------- */

const ModelTabs = styled.div`
  display: flex;
  height: 16px;
  background: #f9f9f9;
  border-top: 1px solid #777;
  border-bottom: 1px solid #777;
`;

const PlayButtons = styled.div`
  display: flex;
  width: 67px;
  padding-left: 2px;
  background: #a5a5a5;
  border-top: 1px solid #333;
`;

const PlayButton = styled.span`
  display: grid;
  place-items: center;
  width: 16px;
  color: #7e7e7e;
  border-right: 1px solid #8a8a8a;
`;

const ModelTab = styled.div`
  width: ${(p) => p.$w}px;
  padding-left: ${(p) => (p.$active ? 2 : 0)}px;
  padding-right: ${(p) => p.$trail || 0}px;
  background: ${(p) => (p.$active ? "#f9f9f9" : "#d2d2d2")};
  border-right: 1px solid #808080;
  font-weight: ${(p) => (p.$active ? 700 : 400)};
  line-height: 12px;
  text-align: center;
  letter-spacing: -0.25px;
`;

const StatusBar = styled.footer`
  display: flex;
  align-items: center;
  height: 18px;
  padding: 0 3px 0 1px;
  background: #f7f7f7;
  letter-spacing: -0.43px;
`;

const StatusGroup = styled.div`
  display: flex;
  align-items: center;
  width: 266px;
  margin-left: auto;
  letter-spacing: -0.3px;
`;

const UnitMark = styled.i`
  margin-left: 13px;
  border: 3px solid transparent;
  border-top: 0;
  border-bottom: 4px solid #333;
`;

const Taskbar = styled.div`
  display: flex;
  height: 40px;
  background: linear-gradient(to right, #22252d 0%, #292d36 12%, #262a32 34%, #2c3446 44%, #2b3447 78%, #23272f 90%, #20242b 100%);
  color: #fff;
`;

const TaskButton = styled.div`
  position: relative;
  display: grid;
  place-items: center;
  width: ${(p) => p.$w || 49}px;
  background: ${(p) => (p.$active ? "#54585f" : "transparent")};
  ${(p) =>
    p.$running &&
    css`
      &::after {
        content: "";
        position: absolute;
        bottom: 0;
        width: ${p.$active ? "100%" : "40px"};
        height: 2px;
        background: #b5cbea;
      }
    `}
`;

const Tray = styled.div`
  display: flex;
  align-items: center;
  width: 423px;
  margin-left: auto;
`;

const Clock = styled.div`
  display: flex;
  flex-direction: column;
  align-items: center;
  width: 57px;
  line-height: 17.5px;
  letter-spacing: -0.5px;
  white-space: nowrap;
`;

const Language = styled.div`
  width: 48px;
  letter-spacing: -0.5px;
  text-align: center;
`;

const OfficeIcon = ({ letter, dark, light }) => (
  <svg width="25" height="23" viewBox="0 0 25 23">
    <rect x="6" y="1" width="18" height="20" rx="1.5" fill={light} />
    <rect x="6" y="11" width="18" height="10" fill={dark} opacity=".7" />
    <rect x="0" y="6" width="13" height="12" rx="1" fill={dark} />
    <text x="6.5" y="15.5" fontSize="10" fontWeight="700" fill="#fff" textAnchor="middle" letterSpacing="0">
      {letter}
    </text>
  </svg>
);

const ZaloIcon = () => (
  <svg width="25" height="24" viewBox="0 0 25 24">
    <rect x="0" y="0" width="20" height="23" rx="7" fill="#1d5fc4" />
    <path d="M7 0h11q6 1 6.5 11.5T18 23H8l-4 .5v-3Q1 18 1 11T7 0z" fill="#fff" />
    <text x="13" y="14.5" fontSize="8.5" fontWeight="600" fill="#1d5fc4" textAnchor="middle" letterSpacing="0">
      Zalo
    </text>
  </svg>
);

const SolidIcon = () => (
  <svg width="26" height="25" viewBox="0 0 26 25">
    <path d="M2 5l7-4 14 1 1 5v12l-6 4H5l-3-3z" fill="#7d1218" />
    <path d="M2 5l7-4 14 1-3 4z" fill="#e03038" />
    <text x="3" y="16.5" fontSize="13" fontWeight="700" fill="#fff" textLength="21">
      SW
    </text>
    <text
      x="6"
      y="24"
      fontSize="8"
      fontWeight="700"
      fill="#fff"
      stroke="#111"
      strokeWidth="1.5"
      paintOrder="stroke"
      letterSpacing="0"
    >
      2022
    </text>
  </svg>
);

const PaintIcon = () => (
  <svg width="25" height="24" viewBox="0 0 25 24">
    <path d="M1 15C0 8 7 3 14 5c7 1 9 8 5 12-3 3-3 6-8 5-2-1 0-4-3-4s-6 1-7-3z" fill="#dfe9ee" stroke="#9db2bb" />
    <circle cx="5" cy="12" r="1.5" fill="#4a9a4a" />
    <circle cx="9" cy="9" r="1.6" fill="#e2b02e" />
    <circle cx="10" cy="15" r="2" fill="#2f74c9" />
    <path d="M12 23L20 3l3-2v4l-8 18z" fill="#d98b3e" />
  </svg>
);

const trayIcons = [
  <path d="M4 12.5l6-6 6 6" stroke="#fff" strokeWidth="1.5" />,
  <>
    <rect x="2" y="2" width="16" height="16" rx="1" fill="#fff" />
    <path d="M8 5h4l4 7h-4z" fill="#f0bb2b" />
    <path d="M8 5L4 12l2 3 4-7z" fill="#2e9c5a" />
    <path d="M6 15l2-3h8l-2 3z" fill="#3d78d8" />
  </>,
  <>
    <path d="M9 2l7 2v6c0 4-3 6-7 8-4-2-7-4-7-8V4z" fill="#fff" />
    <path d="M9 2v16M2 9h14" stroke="#23272f" strokeWidth="1.2" />
    <path d="M10 10h8v8h-8z" fill="#d8343a" />
    <path d="M12 12l4 4M16 12l-4 4" stroke="#fff" strokeWidth="1.3" />
  </>,
  <>
    <rect x="2" y="2" width="16" height="16" fill="#f4cfd2" />
    <path d="M5.5 5.5L10 15l4.5-9.5" stroke="#b3202c" strokeWidth="2.4" />
  </>,
  <>
    <path d="M2 7.5h3L9 4v12l-4-3.5H2z" stroke="#fff" strokeWidth="1.2" />
    <path
      d="M11.5 7.5c1.3 1.5 1.3 3.5 0 5M14 5.5c2.2 2.5 2.2 6.5 0 9M16.5 4c2.7 3.5 2.7 8.5 0 12"
      stroke="#fff"
      strokeWidth="1.1"
    />
  </>,
  <>
    <path d="M3 6h14v8H3zM17 8.5h1.5v3H17" stroke="#fff" strokeWidth="1.3" />
    <path d="M4.5 7.5H9v5H4.5z" fill="#fff" />
  </>,
  <path
    d="M3 17C3 9 9 4 17 4M6.5 17c0-6 4.5-9.5 10.5-9.5M10 17c0-4 3-6 7-6M13.5 17c0-2 1.5-3 3.5-3"
    stroke="#d8d8d8"
    strokeWidth="1.3"
  />,
  <path
    d="M12 4l3-1 1 3-6 9-3 1 1-4zM8 12c-4-3-7 1-4 4s7 1 9-2 5-1 3 1M14 9h4"
    stroke="#fff"
    strokeWidth="1.3"
  />,
];

const TaskbarRow = () => (
  <Taskbar>
    <TaskButton $w={48}>
      <Icon name="windows" size={18} />
    </TaskButton>
    <TaskButton $w={48}>
      <Icon name="taskSearch" />
    </TaskButton>
    <TaskButton $w={48}>
      <Icon name="taskView" />
    </TaskButton>
    <Cell $w={2} />
    <TaskButton>
      <Icon name="store" size={24} />
    </TaskButton>
    <TaskButton $running>
      <Icon name="explorer" size={24} />
    </TaskButton>
    <TaskButton $running>
      <Icon name="chrome" size={25} />
    </TaskButton>
    <TaskButton>
      <Icon name="calculator" size={24} />
    </TaskButton>
    <TaskButton>
      <OfficeIcon letter="O" dark="#1466b8" light="#35a5e4" />
    </TaskButton>
    <TaskButton>
      <OfficeIcon letter="W" dark="#1c56b0" light="#4196e6" />
    </TaskButton>
    <TaskButton $running>
      <OfficeIcon letter="X" dark="#14713d" light="#2fa866" />
    </TaskButton>
    <TaskButton $w={50}>
      <ZaloIcon />
    </TaskButton>
    <TaskButton $w={48} $running $active>
      <SolidIcon />
    </TaskButton>
    <TaskButton $w={50} $running>
      <PaintIcon />
    </TaskButton>
    <Tray>
      {trayIcons.map((shape, i) => (
        <Cell key={i} $w={i === 7 ? 34 : 32}>
          <svg width="19" height="19" viewBox="0 0 20 20" fill="none">
            {shape}
          </svg>
        </Cell>
      ))}
      <Language>ENG</Language>
      <Clock>
        <span>11:44 CH</span>
        <span>26/12/2022</span>
      </Clock>
      <Cell $w={54}>
        <svg width="20" height="19" viewBox="0 0 20 19">
          <path d="M2 2h16v12h-4l-4 4v-4H2z" fill="#fff" />
          <path d="M5 5h10M5 8h10M5 11h6" stroke="#23272f" strokeWidth="1.2" />
          <path d="M17 11a4 4 0 1 0 1 6" fill="none" stroke="#fff" strokeWidth="1.3" />
        </svg>
      </Cell>
    </Tray>
  </Taskbar>
);

const App = () => (
  <>
    <GlobalStyle />
    <Title />
    <Commands />
    <Tabs>
      {headerTabs.map(([label, width], i) => (
        <Tab key={label} $w={width} $active={i === 0}>
          {label}
        </Tab>
      ))}
    </Tabs>
    <Workspace>
      <ConfigurationPanel />
      <GraphicsArea />
    </Workspace>
    <ModelTabs>
      <PlayButtons>
        {["first", "previous", "next", "last"].map((name) => (
          <PlayButton key={name}>
            <Icon name={name} size={9} />
          </PlayButton>
        ))}
      </PlayButtons>
      <ModelTab $w={57} $active>
        Model
      </ModelTab>
      <ModelTab $w={68}>3D Views</ModelTab>
      <ModelTab $w={108} $trail={8}>
        Motion Study 1
      </ModelTab>
    </ModelTabs>
    <StatusBar>
      <span>SOLIDWORKS Premium 2022 SP3.1</span>
      <StatusGroup>
        <div>Editing Part</div>
        <Cell $w={72}>
          <Icon name="rebuild" size={15} />
        </Cell>
        <Cell $w={41} />
        <Cell $w={48}>Custom</Cell>
        <UnitMark />
      </StatusGroup>
      <Icon name="tag" size={16} />
    </StatusBar>
    <TaskbarRow />
  </>
);

export default App;
